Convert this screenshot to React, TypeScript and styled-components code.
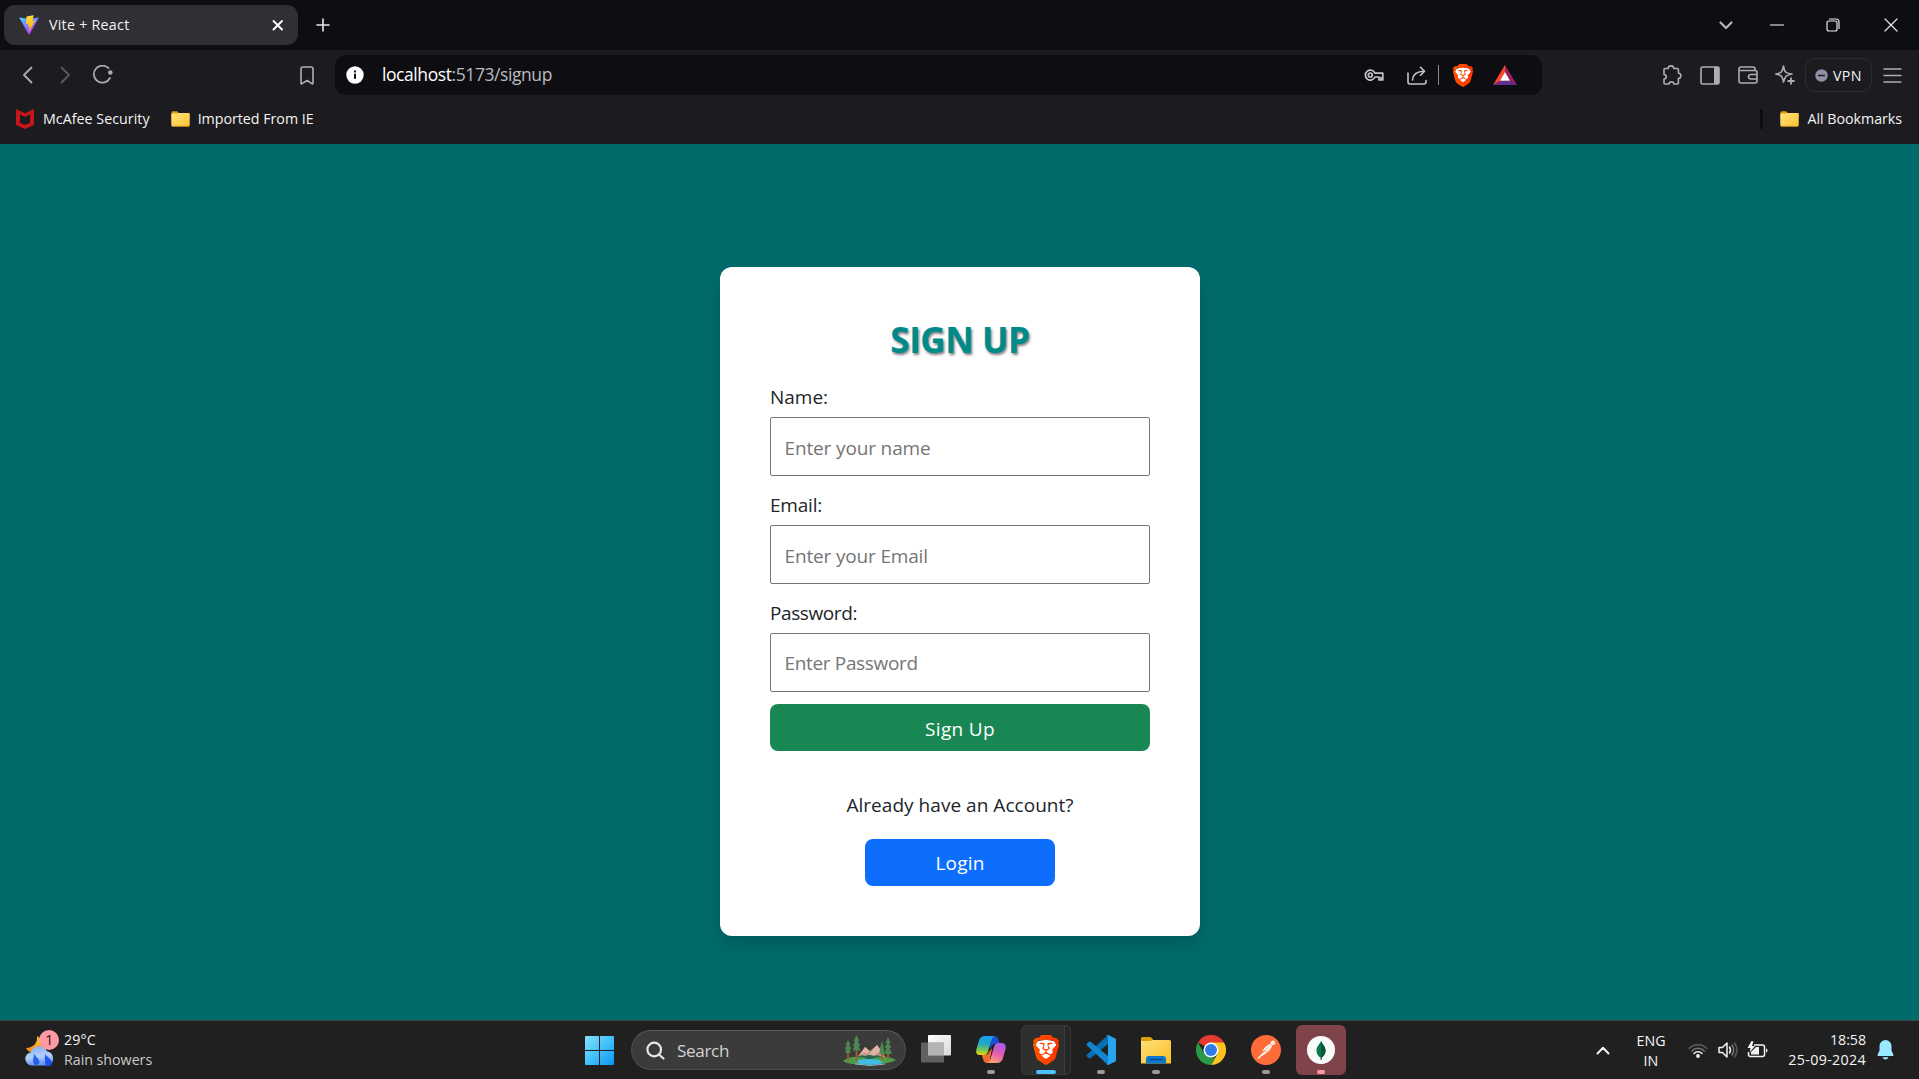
import React from "react";
import styled, { createGlobalStyle } from "styled-components";
import { SiBrave, SiPostman } from "react-icons/si";

const GlobalStyle = createGlobalStyle`
  * { box-sizing: border-box; }
  html, body, #root { height: 100%; }
  body {
    margin: 0;
    overflow: hidden;
    font-family: "Open Sans", "Noto Sans", sans-serif;
  }
  svg { display: block; flex: none; }
`;

const Screen = styled.div`
  display: flex;
  flex-direction: column;
  height: 1079px;
  background: #006b6b;
`;

/* ---------- shared ---------- */

const Slot = styled.span<{ $w: number; $ml?: number }>`
  display: flex;
  flex: none;
  align-items: center;
  justify-content: center;
  width: ${(p) => p.$w}px;
  margin-left: ${(p) => p.$ml ?? 0}px;
`;

const Caption = styled.span<{ $ls?: number; $size?: number; $color?: string; $ml?: number; $drop?: number }>`
  flex: none;
  margin-left: ${(p) => p.$ml ?? 0}px;
  padding-top: ${(p) => p.$drop ?? 0}px;
  font-size: ${(p) => p.$size ?? 14.25}px;
  line-height: 20px;
  letter-spacing: ${(p) => p.$ls ?? 0}px;
  color: ${(p) => p.$color ?? "#f4f4f5"};
  white-space: nowrap;
`;

const Spacer = styled.div`
  flex: 1;
`;

/* ---------- browser chrome ---------- */

const TabStrip = styled.header`
  display: flex;
  align-items: center;
  flex: none;
  height: 50px;
  padding: 0 21px 0 4px;
  background: #0d0e12;
`;

const Tab = styled.div`
  display: flex;
  align-items: center;
  width: 294px;
  height: 40px;
  padding: 0 14px 0 15px;
  border-radius: 11px;
  background: #302f34;
`;

const Toolbar = styled.nav`
  display: flex;
  align-items: center;
  flex: none;
  height: 50px;
  padding: 0 17px 0 18px;
  background: #1c1b1f;
`;

const AddressBar = styled.div`
  display: flex;
  align-items: center;
  flex: none;
  width: 1207px;
  height: 40px;
  margin-left: 21px;
  padding: 0 25px 0 11px;
  border-radius: 11px;
  background: #0e0e12;
`;

const Url = styled.span`
  margin: -2px 0 0 18px;
  font-size: 17.5px;
  line-height: 24px;
  letter-spacing: -0.42px;
  color: #fff;
  span { color: #b9babe; }
`;

const Divider = styled.i`
  width: 1px;
  height: 20px;
  margin-left: 11px;
  background: #8c8c90;
`;

const VpnPill = styled.div`
  display: flex;
  align-items: center;
  flex: none;
  width: 67px;
  height: 34px;
  margin-left: 10px;
  padding-left: 9px;
  border: 1px solid #2e2d33;
  border-radius: 10px;
`;

const BookmarksBar = styled.div`
  display: flex;
  align-items: flex-start;
  flex: none;
  height: 44px;
  padding: 8px 17px 0 16px;
  background: #1c1b1f;
`;

const Bookmark = styled.div<{ $ml?: number; $gap: number }>`
  display: flex;
  align-items: center;
  gap: ${(p) => p.$gap}px;
  height: 22px;
  margin-left: ${(p) => p.$ml ?? 0}px;
`;

const BookmarkDivider = styled.i`
  width: 3px;
  height: 20px;
  margin: 1px 17px 0 0;
  border-radius: 1px;
  background: #0d0e12;
`;

/* ---------- page ---------- */

const Page = styled.main`
  display: flex;
  align-items: flex-start;
  justify-content: center;
  height: 876px;
  flex: none;
  padding: 123px 0 0 1px;
  background: #006b6b;
`;

const Card = styled.section`
  display: flex;
  flex-direction: column;
  align-items: center;
  width: 480px;
  height: 669px;
  padding: 51px 50px 50px;
  border-radius: 12px;
  background: #fff;
  box-shadow: 0 10px 20px rgba(0, 0, 0, 0.15);
  color: #212529;
`;

const Title = styled.h2`
  margin: 0 0 21px;
  font-size: 35px;
  font-weight: 700;
  line-height: 43px;
  letter-spacing: -0.4px;
  color: #008b8b;
  text-shadow: 1.5px 1.5px 2.500px rgba(0, 0, 0, 0.5);
`;

const Form = styled.form`
  display: flex;
  flex-direction: column;
  width: 100%;
`;

const Field = styled.label<{ $ls: number }>`
  display: flex;
  flex-direction: column;
  gap: 5px;
  margin-bottom: 14px;
  font-size: 19px;
  line-height: 30px;
  letter-spacing: ${(p) => p.$ls}px;
  &:last-of-type { margin-bottom: 12px; }
`;

const Input = styled.input<{ $ls: number; $drop: number }>`
  width: 100%;
  height: 59px;
  padding: ${(p) => p.$drop}px 13.5px 0;
  border: 1px solid #767676;
  border-radius: 2px;
  outline: none;
  background: #fff;
  font: inherit;
  letter-spacing: ${(p) => p.$ls}px;
  &::placeholder { color: #757575; opacity: 1; }
`;

const Button = styled.button<{ $bg: string; $w: string; $ls: number; $drop?: number }>`
  width: ${(p) => p.$w};
  height: 47px;
  padding: ${(p) => p.$drop ?? 0}px 0 0;
  border: 0;
  border-radius: 8px;
  background: ${(p) => p.$bg};
  color: #fff;
  font-family: inherit;
  font-size: 19px;
  line-height: 30px;
  letter-spacing: ${(p) => p.$ls}px;
`;

const Prompt = styled.p`
  margin: 39px 0 19px;
  font-size: 19px;
  line-height: 30px;
  letter-spacing: 0.04px;
`;

/* ---------- taskbar ---------- */

const Taskbar = styled.footer`
  display: flex;
  align-items: center;
  flex: none;
  height: 59px;
  padding: 0 25px;
  border-top: 1px solid #454545;
  background: #202020;
`;

const Stack = styled.div<{ $align?: string; $ml?: number; $w?: number }>`
  display: flex;
  flex: none;
  flex-direction: column;
  align-items: ${(p) => p.$align ?? "flex-start"};
  width: ${(p) => (p.$w ? p.$w + "px" : "auto")};
  margin-left: ${(p) => p.$ml ?? 0}px;
`;

const Weather = styled.div`
  display: flex;
  align-items: center;
  width: 559px;
`;

const SearchBox = styled.div`
  display: flex;
  align-items: center;
  flex: none;
  width: 275px;
  height: 40px;
  margin-left: 17px;
  padding: 0 9px 0 14px;
  border: 1px solid #4d4d4d;
  border-top-color: #5c5c5c;
  border-radius: 20px;
  background: #3b3b3b;
`;

const Apps = styled.div`
  display: flex;
  margin-left: 2px;
`;

const AppSlot = styled.div`
  display: flex;
  justify-content: center;
  width: 55px;
  height: 50px;
`;

const Tile = styled.div<{ $bg?: string; $outlined?: boolean }>`
  display: flex;
  flex-direction: column;
  align-items: center;
  justify-content: space-between;
  width: 50px;
  height: 50px;
  padding: 10px 0 1px;
  border-radius: 6px;
  background: ${(p) => p.$bg ?? "transparent"};
  box-shadow: ${(p) => (p.$outlined ? "inset 0 0 0 1px #373838" : "none")};
`;

const Indicator = styled.i<{ $w?: number; $color?: string }>`
  width: ${(p) => p.$w ?? 8}px;
  height: 4px;
  border-radius: 2px;
  background: ${(p) => p.$color ?? "#9a9a9a"};
`;

/* ---------- drawings ---------- */

const ViteIcon = () => (
  <svg width="20" height="20" viewBox="0 0 32 32">
    <defs>
      <linearGradient id="va" x1="0" y1="0" x2=".6" y2="1"><stop stopColor="#41d1ff" /><stop offset="1" stopColor="#bd34fe" /></linearGradient>
      <linearGradient id="vb" x1=".4" y1="0" x2=".6" y2="1"><stop stopColor="#ffea83" /><stop offset=".1" stopColor="#ffdd35" /><stop offset="1" stopColor="#ffa800" /></linearGradient>
    </defs>
    <path fill="url(#va)" d="M31.3 5 16.9 30.8c-.3.5-1 .5-1.4 0L.8 5c-.3-.6.2-1.3.8-1.2L16 6.4l14.500-2.600c.6-.1 1.100.6.8 1.200Z" />
    <path fill="url(#vb)" d="M23 .2 12.300 2.300a.4.400 0 0 0-.3.400l-.7 11.100c0 .3.200.500.500.400l3-.7c.3 0 .5.2.4.5l-.9 4.400c0 .3.200.500.500.400l1.800-.5c.3-.1.600.2.500.5l-1.400 6.800c-.1.400.500.700.700.300L25.500 9.100c.2-.3-.1-.6-.4-.6l-3.100.6c-.3.100-.5-.2-.4-.500L23.500.7c.1-.3-.2-.5-.5-.5Z" />
  </svg>
);

const Brave = ({ w, h, id }: { w: number; h: number; id: string }) => (
  <svg width={w} height={h} viewBox="1.900 0 20.200 24" preserveAspectRatio="none">
    <defs><linearGradient id={id}><stop stopColor="#ff5500" /><stop offset="1" stopColor="#ff3200" /></linearGradient></defs>
    <path d="M5 5 12 3.500 19 5 20 8 17 17 12 21 7 17 4 8Z" fill="#fff" />
    <SiBrave size={24} fill={`url(#${id})`} color="#ff4a0c" />
  </svg>
);

const Folder = () => (
  <svg width="19" height="16" viewBox="0 0 19 16">
    <defs><linearGradient id="fo" x2="1" y2="1"><stop stopColor="#ffe27a" /><stop offset="1" stopColor="#fcc436" /></linearGradient></defs>
    <path d="M.5 2Q.5.300 2 .300h4L8 2.200h9.500q1 0 1 1V8H.5Z" fill="#dba112" />
    <path d="M.3 3.500q0-1 1-1H6L8 1.900h9.700q1 0 1 1V14q0 1.600-1.500 1.600H1.800Q.300 15.600.300 14Z" fill="url(#fo)" />
    <path d="M1 15.300h17" stroke="#c98e12" strokeWidth=".8" />
  </svg>
);

const Line = ({ w, h, d, c = "#aeadb2", s = 1.6 }: { w: number; h: number; d: string; c?: string; s?: number }) => (
  <svg width={w} height={h} viewBox={`0 0 ${w} ${h}`} fill="none" stroke={c} strokeWidth={s} strokeLinecap="round" strokeLinejoin="round">
    <path d={d} />
  </svg>
);

const Windows = () => (
  <svg width="29" height="29" viewBox="0 0 29 29">
    <defs><linearGradient id="wi" x2="1" y2="1"><stop stopColor="#86e2fd" /><stop offset=".5" stopColor="#42c2fb" /><stop offset="1" stopColor="#0d93f2" /></linearGradient></defs>
    <path fill="url(#wi)" d="M1 0h13v14H0V1Q0 0 1 0ZM15 0h13q1 0 1 1v13H15ZM0 15h14v14H1q-1 0-1-1ZM15 15h14v13q0 1-1 1H15Z" />
  </svg>
);

const WeatherIcon = () => (
  <svg width="36" height="40" viewBox="0 0 36 40">
    <defs>
      <linearGradient id="cl" x2=".2" y2="1"><stop stopColor="#7fabf5" /><stop offset=".6" stopColor="#b4d0fb" /><stop offset="1" stopColor="#6497ef" /></linearGradient>
      <linearGradient id="dr" y2="1"><stop stopColor="#2f6eea" /><stop offset="1" stopColor="#1549e8" /></linearGradient>
      <linearGradient id="mo" x1="1" x2="0" y2="1"><stop stopColor="#ffc929" /><stop offset="1" stopColor="#ee8417" /></linearGradient>
    </defs>
    <path d="M12 6c1 7-4 12-11 12 2 4 7 6 12 4 6-2 7-10 3-13Z" fill="url(#mo)" />
    <path d="M6.500 35.500a6.700 6.700 0 0 1-.5-13.300 8.600 8.600 0 0 1 16-1 7.500 7.500 0 0 1 1.500 14.300Z" fill="url(#cl)" />
    <path d="M9 24c2.500 3 5.500 5.500 5.500 8.500a3.300 3.300 0 0 1-6.400 0c-.3-3 .6-5.500.9-8.500Zm11 0c2.500 3 7 6 7 9.200a3.500 3.500 0 0 1-6.900 0c-.4-3-.400-6 -.1-9.200Z" fill="url(#dr)" />
    <circle cx="24" cy="10" r="10" fill="#ff99a4" />
    <text x="24.300" y="15" fontSize="14" textAnchor="middle" fill="#2b1518">1</text>
  </svg>
);

const Landscape = () => (
  <svg width="53" height="31" viewBox="0 0 53 31">
    <path d="M15 21 22 12l5 4 7-6 9 13H15Z" fill="#c9968a" />
    <path d="m22 12 4 4-2 3-3-2-5 5ZM34 10l6 8-4-1-3 2-4 3-3-2Z" fill="#e0b5a6" />
    <path d="M14 22q4-3 8-1 5-2 9 0 5-2 9 2v2H14Z" fill="#27664d" />
    <path d="M0 26q6-5 16-4 6 0 8 2-8 3-5 5Q6 30 0 26Zm53-1q-7-4-17-3-6 1-7 2 8 2 7 5 12-1 17-4Z" fill="#4c9d47" />
    <path d="M15 25q11-2 22 0l3 3q-14 4-26 0Z" fill="#40bde2" />
    <path d="M12 29q15 3 30 0" stroke="#8bb9c9" fill="none" />
    <path d="M5 8v18M13.500 4v23M39 9v16M45 6v18" stroke="#a75d2b" strokeWidth="1.800" />
    <path d="m5 5 2.500 5H6l2.500 4-1.800 0 1 4H2.300l1-4H1.500L4 10H2.500Zm8.500-5 3 6h-1.700l2.500 5h-1.800l2 4.500h-8l2-4.500H9.700l2.500-5h-1.700ZM39 6l1.700 6 1 7h-5.400l1-7Zm6-4 2.500 6h-1.700l2.500 5h-1.800l2.500 6H41l2.500-6h-1.800l2.500-5h-1.700Z" fill="#4d8753" />
  </svg>
);

const TaskView = () => (
  <svg width="30" height="28" viewBox="0 0 30 28">
    <defs><linearGradient id="tv" x2="1" y2="1"><stop stopColor="#fff" /><stop offset="1" stopColor="#d9d9d9" /></linearGradient></defs>
    <rect x="7" width="23" height="20.500" rx="1" fill="url(#tv)" />
    <rect y="7.500" width="23" height="20" rx="1" fill="#737373" fillOpacity=".78" />
    <path d="M7 8h16v12.500H7Z" fill="#b4b4b4" />
  </svg>
);

const Copilot = () => (
  <svg width="30" height="30" viewBox="0 0 30 30">
    <defs>
      <linearGradient id="c1" x1=".4" x2=".3" y2="1"><stop stopColor="#1a9cf0" /><stop offset=".4" stopColor="#21a8c4" /><stop offset=".75" stopColor="#79c754" /><stop offset="1" stopColor="#f2d40d" /></linearGradient>
      <linearGradient id="c2" x1=".7" x2=".3" y2="1"><stop stopColor="#a75bee" /><stop offset=".5" stopColor="#e35bb2" /><stop offset="1" stopColor="#ffa36c" /></linearGradient>
    </defs>
    <path d="M15 1h3.500Q21.500 1 22.500 5l1 3.500H20q-3 0-4 2.500l-2 3 1-8Z" fill="#1c4ed4" />
    <path d="M14 28H11q-3 0-4-4l-1.300-4H9q3 0 4-3l3-4-2 12Z" fill="#ef6b31" />
    <path d="M9 1h10.500q-3 0-4 4l-3.500 11.500q-1 3.500-4 3.500H4q-5 0-3.500-6L3 5.500Q4.300 1 9 1Z" fill="url(#c1)" />
    <path d="M21 28H10.500q3 0 4-4L18 12q1-4 4-4h3.500q5 0 4 6L27 23q-1.500 5-6 5Z" fill="url(#c2)" />
  </svg>
);

const VSCode = () => (
  <svg width="30" height="30" viewBox="0 0 30 30">
    <path d="M22 0 1 19.500q-1 1 0 2l2 1.800q.8.500 1.600 0L22 9Z" fill="#0a6fb5" />
    <path d="M22 30 1 10.500q-1-1 0-2l2-1.800q.8-.5 1.600 0L22 21Z" fill="#1185cd" />
    <path d="m22 0 7 3.300q1 .500 1 1.500v20.400q0 1-1 1.500L22 30q-1 0-1.500-1 1.500.5 1.500-1V2q0-1.500-1.500-1 .5-1 1.500-1Z" fill="#27a4ef" />
  </svg>
);

const Explorer = () => (
  <svg width="30" height="30" viewBox="0 0 30 30">
    <defs><linearGradient id="ex" x2="1" y2="1"><stop stopColor="#ffe07a" /><stop offset="1" stopColor="#fbbf24" /></linearGradient></defs>
    <path d="M0 3.500Q0 2 1.500 2H9q1 0 2 1.200L13 6H0Z" fill="#dca10a" />
    <path d="M0 6h9q1.500 0 2.500-1h17Q30 5 30 6.500V28.500H0Z" fill="url(#ex)" />
    <path d="M5 28.500V24q0-3 3-3h14q3 0 3 3v4.500Z" fill="#0c77cf" />
    <path d="M8.500 24.500h13" stroke="#074a8c" strokeWidth="1.400" />
  </svg>
);

const Chrome = () => (
  <svg width="30" height="30" viewBox="0 0 30 30">
    <path d="M15 15 2 7.500A15 15 0 0 1 28 7.500Z" fill="#e33b2e" />
    <path d="M15 7.500h13A15 15 0 0 1 15 30l6.500-11.300Z" fill="#fcc31e" />
    <path d="M2 7.500 8.500 18.700 15 22.500h4.300L15 30A15 15 0 0 1 2 7.500Z" fill="#2a9a48" />
    <circle cx="15" cy="15" r="7.500" fill="#fff" />
    <circle cx="15" cy="15" r="6" fill="#2f7bea" />
  </svg>
);

const Postman = () => (
  <svg width="30" height="30" viewBox="0 0 24 24">
    <circle cx="12" cy="12" r="11" fill="#fff" />
    <SiPostman size={24} color="#ff6c37" />
  </svg>
);

const Mongo = () => (
  <svg width="30" height="30" viewBox="-1 -1 30 30">
    <circle cx="14" cy="14" r="14" fill="#f9fbfa" />
    <path d="M14 5c1 3 4.500 5 4.500 9.500 0 4-2.500 6-4 7.200V24h-1v-2.300c-1.500-1.200-4-3.200-4-7.200C9.500 10 13 8 14 5Z" fill="#0b7a4b" />
    <path d="M14 5v19h.5v-2.300c1.500-1.200 4-3.200 4-7.200C18.500 10 15 8 14 5Z" fill="#06583a" />
  </svg>
);

const stackedWindows = "linear-gradient(to right, #2d2e2e 43px, #3c3d3d 43px 44px, #262727 44px)";

const apps: { key: string; icon: React.ReactNode; bg?: string; outlined?: boolean; bar?: { w?: number; color?: string } | null }[] = [
  { key: "taskview", icon: <TaskView />, bar: null },
  { key: "copilot", icon: <Copilot />, bar: {} },
  { key: "brave", icon: <Brave w={26} h={30} id="bt" />, bg: stackedWindows, outlined: true, bar: { w: 20, color: "#4cc2ff" } },
  { key: "vscode", icon: <VSCode />, bar: {} },
  { key: "explorer", icon: <Explorer />, bar: {} },
  { key: "chrome", icon: <Chrome />, bar: null },
  { key: "postman", icon: <Postman />, bar: {} },
  { key: "mongo", icon: <Mongo />, bg: "#7e444a", bar: { color: "#ff99a4" } },
];

export default function App() {
  return (
    <Screen>
      <GlobalStyle />

      <TabStrip>
        <Tab>
          <ViteIcon />
          <Caption $ml={10} $ls={0.26}>Vite + React</Caption>
          <Spacer />
          <Line w={12} h={12} c="#fff" s={1.9} d="M1.500 2l8.500 8.500M10 2l-8.500 8.500" />
        </Tab>
        <Slot $w={14} $ml={18}><Line w={14} h={14} c="#e8e8ea" d="M7 1v12M1 7h12" /></Slot>
        <Spacer />
        <Slot $w={14}><Line w={14} h={9} c="#b5b5b9" s={2.200} d="M1.500 1.500 7 7l5.500-5.500" /></Slot>
        <Slot $w={14} $ml={37}><Line w={14} h={3} c="#fff" s={1} d="M.5 1h13" /></Slot>
        <Slot $w={14} $ml={42}><Line w={14} h={14} c="#e8e8ea" s={1.200} d="M1 5q0-2 2-2h6q2 0 2 2v6q0 2-2 2H3q-2 0-2-2ZM3.500 1H10q3 0 3 3v6.500" /></Slot>
        <Slot $w={14} $ml={44}><Line w={14} h={14} c="#e8e8ea" s={1.200} d="M1 1l12 12M13 1 1 13" /></Slot>
      </TabStrip>

      <Toolbar>
        <Slot $w={18}><Line w={11} h={18} s={1.800} d="M9.500 1.500 2 9l7.500 7.500" /></Slot>
        <Slot $w={18} $ml={20}><Line w={11} h={18} c="#5b5a5f" s={1.800} d="M1.500 1.500 9 9l-7.500 7.500" /></Slot>
        <Slot $w={20} $ml={19}>
          <svg width="20" height="20" viewBox="0 0 20 20" fill="none" stroke="#aeadb2" strokeWidth="1.700">
            <path d="M15.500 3.200A8.500 8.500 0 1 0 17 13" strokeLinecap="round" />
            <circle cx="17.300" cy="7.500" r="2.300" fill="#aeadb2" stroke="none" />
          </svg>
        </Slot>
        <Slot $w={14} $ml={187}><Line w={14} h={19} d="M1 3q0-2 2-2h8q2 0 2 2v14.500q-.2.500-1 .2L7 14.500 2 17.700q-.8.300-1-.2Z" /></Slot>
        <AddressBar>
          <svg width="18" height="18" viewBox="0 0 18 18">
            <circle cx="9" cy="9" r="8.700" fill="#fff" />
            <path d="M9 7.800v5M9 4.500v1.900" stroke="#0e0e12" strokeWidth="2" />
          </svg>
          <Url>localhost<span>:5173/signup</span></Url>
          <Spacer />
          <svg width="21" height="14" viewBox="0 0 21 14" fill="none" stroke="#c4c4c8" strokeWidth="1.700" strokeLinejoin="round">
            <path d="M11 5.200A5 5 0 1 0 11 9h4v3h3.800V5.200Z" /><circle cx="6.300" cy="7" r="2" />
            <path d="M17 9v3" />
          </svg>
          <Slot $w={20} $ml={22}><Line w={20} h={19} c="#c4c4c8" d="M1 7v9q0 2 2 2h14q2 0 2-2v-1.500M5.500 14Q6 5.500 17 5.200M13.500 1.200l4 4-4 4" /></Slot>
          <Divider />
          <Slot $w={20} $ml={14}><Brave w={20} h={23} id="ba" /></Slot>
          <Slot $w={24} $ml={20}>
            <svg width="24" height="20" viewBox="0 0 24 20">
              <path d="M12 0 0 20l7-4 5-8.500Z" fill="#ff4724" /><path d="M12 0 24 20l-7-4-5-8.500Z" fill="#9e1f63" />
              <path d="M0 20h24l-7-4H7Z" fill="#662d91" /><path d="m12 7 5 8.700H7Z" fill="#fff" />
            </svg>
          </Slot>
        </AddressBar>
        <Spacer />
        <Slot $w={20}><Line w={20} h={20} d="M2 4.500q0-1 1-1h3.200C6.200 0 11.700 0 11.800 3.500h3.600q1 0 1 1v3.500c3.300.500 3.300 5 0 5.500v4.500q0 1-1 1h-3.600c0-2.800-4.700-2.800-4.700 0H3q-1 0-1-1v-4c3-.2 3-4.300 0-4.500Z" /></Slot>
        <Slot $w={20} $ml={18}>
          <svg width="20" height="19" viewBox="0 0 20 19"><rect x="1" y="1" width="18" height="17" rx="1.500" fill="none" stroke="#aeadb2" strokeWidth="1.600" /><path d="M14 1h5v17h-5Z" fill="#aeadb2" /></svg>
        </Slot>
        <Slot $w={20} $ml={18}><Line w={20} h={18} d="M1 4V3q0-2 2-2h12q2 0 2 2v1M1 3.500q0 1 2 1h14q2 0 2 2V15q0 2-2 2H3q-2 0-2-2ZM19 8.500h-6q-2.500 0-2.500 2.200T13 13h6" /></Slot>
        <Slot $w={20} $ml={17}>
          <svg width="20" height="20" viewBox="0 0 20 20" fill="none" stroke="#aeadb2" strokeWidth="1.600" strokeLinejoin="round">
            <path d="M8.500 1q1 5.500 2.500 6.200 1 1 6 1.800-4 .8-5.500 1.800Q10 12 8.500 17 7.500 12 6 10.800 5 10 .800 9 5 8.200 6 7.200 7.500 6 8.500 1Z" />
            <path d="M16 12.500v7M12.500 16h7" strokeWidth="1.800" />
          </svg>
        </Slot>
        <VpnPill>
          <svg width="13" height="13" viewBox="0 0 13 13"><circle cx="6.500" cy="6.500" r="6.200" fill="#8f90a6" /><path d="M3 6.500h7" stroke="#1c1b1f" strokeWidth="1.500" /></svg>
          <Caption $ml={5} $ls={0.3} $drop={1}>VPN</Caption>
        </VpnPill>
        <Slot $w={19} $ml={11}><Line w={19} h={16} d="M1 2h17M1 8.500h17M1 15h17" s={1.500} /></Slot>
      </Toolbar>

      <BookmarksBar>
        <Bookmark $gap={9}>
          <svg width="18" height="20" viewBox="0 0 18 20"><path d="m0 0 9 4.200L18 0v16l-9 4-9-4ZM4 5.500v8.300l5 2.300 5-2.300V5.500L9 8Z" fill="#c5161d" fillRule="evenodd" /></svg>
          <Caption $ls={0.03}>McAfee Security</Caption>
        </Bookmark>
        <Bookmark $ml={21} $gap={8}><Folder /><Caption $ls={-0.02}>Imported From IE</Caption></Bookmark>
        <Spacer />
        <BookmarkDivider />
        <Bookmark $gap={9}><Folder /><Caption $ls={-0.04}>All Bookmarks</Caption></Bookmark>
      </BookmarksBar>

      <Page>
        <Card>
          <Title>SIGN UP</Title>
          <Form>
            <Field $ls={-0.02}>Name:<Input $ls={-0.14} $drop={2} placeholder="Enter your name" /></Field>
            <Field $ls={-0.2}>Email:<Input $ls={-0.16} $drop={2} placeholder="Enter your Email" /></Field>
            <Field $ls={-0.4}>Password:<Input $ls={-0.34} $drop={0} type="password" placeholder="Enter Password" /></Field>
            <Button type="button" $bg="#198754" $w="100%" $ls={0.34} $drop={2}>Sign Up</Button>
          </Form>
          <Prompt>Already have an Account?</Prompt>
          <Button type="button" $bg="#0d6efd" $w="190px" $ls={0.18}>Login</Button>
        </Card>
      </Page>

      <Taskbar>
        <Weather>
          <WeatherIcon />
          <Stack $ml={3}>
            <Caption $ls={0.1}>29°C</Caption>
            <Caption $ls={-0.03} $color="#c9c9c9">Rain showers</Caption>
          </Stack>
        </Weather>
        <Slot $w={29} $ml={1}><Windows /></Slot>
        <SearchBox>
          <Line w={19} h={19} c="#e6e6e6" s={2.200} d="M15 8.500A6.800 6.800 0 1 1 1.400 8.500A6.800 6.800 0 1 1 15 8.500M13 13.500l4.500 4" />
          <Caption $ml={12} $size={17.1} $ls={-0.35} $color="#d2d2d2" $drop={2}>Search</Caption>
          <Spacer />
          <Landscape />
        </SearchBox>
        <Apps>
          {apps.map((a) => (
            <AppSlot key={a.key}>
              <Tile $bg={a.bg} $outlined={a.outlined}>
                {a.icon}
                {a.bar && <Indicator $w={a.bar.w} $color={a.bar.color} />}
              </Tile>
            </AppSlot>
          ))}
        </Apps>
        <Spacer />
        <Line w={14} h={9} c="#f2f2f2" s={2} d="M1.500 7.500 7 1.800l5.500 5.700" />
        <Stack $ml={22} $w={38} $align="center">
          <Caption $drop={1}>ENG</Caption>
          <Caption $ls={0.1}>IN</Caption>
        </Stack>
        <Slot $w={20} $ml={18}>
          <svg width="20" height="16" viewBox="0 0 20 16" fill="none" strokeWidth="1.500" strokeLinecap="round">
            <path d="M1 6.500a12.500 12.500 0 0 1 18 0" stroke="#5c5c5c" /><path d="M3.700 9a8.800 8.800 0 0 1 12.600 0" stroke="#777" />
            <path d="M6 11.500a5.500 5.500 0 0 1 8 0" stroke="#f2f2f2" /><circle cx="10" cy="14" r="1.900" fill="#f2f2f2" />
          </svg>
        </Slot>
        <Slot $w={21} $ml={10}>
          <svg width="21" height="18" viewBox="0 0 21 18" fill="none" stroke="#f2f2f2" strokeWidth="1.500" strokeLinecap="round" strokeLinejoin="round">
            <path d="M1 6.500h3.500L9 2v14l-4.500-4.500H1ZM11.500 6q2 3 0 6" /><path d="M14 4q3.500 5 0 10" stroke="#777" /><path d="M16.500 2q5 7 0 14" stroke="#5c5c5c" />
          </svg>
        </Slot>
        <Slot $w={21} $ml={8}>
          <svg width="21" height="18" viewBox="0 0 21 18">
            <path d="M7 4h8.500q2 0 2 2v7.500q0 2-2 2h-12q-2 0-2-2V11" fill="none" stroke="#f2f2f2" strokeWidth="1.500" />
            <path d="M19 7.500q1.500 0 1.500 2t-1.500 2ZM9 6h3v7.500H4V11ZM4.500 0 .5 7h3l-.8 4.500L8 5H5L6.500.500Z" fill="#f2f2f2" />
          </svg>
        </Slot>
        <Stack $w={82} $ml={16} $align="flex-end">
          <Caption $ls={-0.07}>18:58</Caption>
          <Caption $ls={0.33}>25-09-2024</Caption>
        </Stack>
        <Slot $w={17} $ml={11}>
          <svg width="17" height="20" viewBox="0 0 17 20" fill="#99e9ff"><path d="M8.500 0a6 6 0 0 1 6 6v4.500L16.500 15q.3 1-.8 1H1.300q-1.100 0-.8-1l2-4.500V6a6 6 0 0 1 6-6ZM5.500 17.200h6q-.8 2.300-3 2.300t-3-2.300Z" /></svg>
        </Slot>
      </Taskbar>
    </Screen>
  );
}
